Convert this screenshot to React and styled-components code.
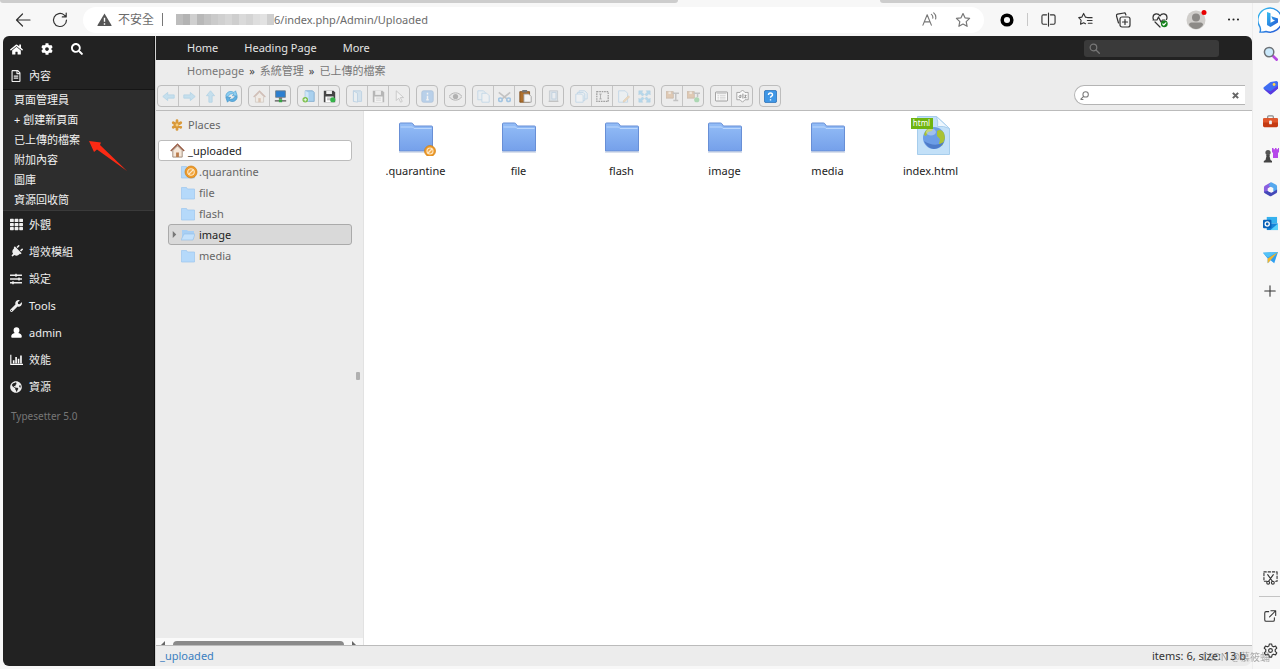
import React from "react";
import styled, { createGlobalStyle, css } from "styled-components";
import {
  FaHome,
  FaCog,
  FaSearch,
  FaRegFileAlt,
  FaTh,
  FaPlug,
  FaSlidersH,
  FaWrench,
  FaGlobeAmericas,
} from "react-icons/fa";

const GlobalStyle = createGlobalStyle`
  * { box-sizing: border-box; }
  html, body { margin: 0; height: 100%; }
  body {
    font: 11px/20px "Noto Sans", "Noto Sans CJK TC", sans-serif;
    color: #333;
    background: #f7f7f7;
    overflow: hidden;
  }
  #root { height: 100%; }
  button, input { font: inherit; color: inherit; margin: 0; padding: 0; border: 0; background: none; }
  button { display: flex; align-items: center; justify-content: center; }
  input:focus { outline: none; }
  a { color: inherit; text-decoration: none; }
  ul, ol { list-style: none; margin: 0; padding: 0; }
  svg { display: block; flex: none; }
`;

/* ---------- browser frame ---------- */

const Browser = styled.div`
  height: 100vh;
  display: flex;
  flex-direction: column;
`;

const TabStrip = styled.div`
  display: flex;
  flex: none;
  height: 3px;
  background: #f7f7f7;
`;

const TabEdge = styled.div`
  flex: ${(p) => p.$grow} 1 0;
  background: ${(p) => (p.$active ? "#f7f7f7" : "#cdcdcd")};
  border-radius: ${(p) => (p.$active ? 0 : "0 0 3px 3px")};
`;

const Frame = styled.div`
  flex: 1;
  min-height: 0;
  display: flex;
`;

const Window = styled.div`
  flex: 1;
  min-width: 0;
  display: flex;
  flex-direction: column;
`;

const AddressRow = styled.div`
  flex: none;
  height: 33px;
  display: flex;
  align-items: center;
  padding-left: 4px;
`;

const ChromeButton = styled.button`
  width: 37px;
  height: 28px;
  color: #333;
`;

const AddressPill = styled.div`
  flex: 1;
  height: 26px;
  margin: 0 4px 0 5px;
  padding: 0 5px 0 14px;
  display: flex;
  align-items: center;
  border-radius: 13px;
  background: #fff;
  color: #6b6b6b;
`;

const Insecure = styled.span`
  padding: 0 6px;
  font-size: 12px;
`;

const Divider = styled.span`
  flex: none;
  width: 1px;
  height: 13px;
  margin: 0 2px;
  background: ${(p) => p.$tone || "#c8c8c8"};
`;

const Mosaic = styled.span`
  display: flex;
  flex: none;
  margin-left: 11px;
`;

const Tile = styled.i`
  width: 7px;
  height: 11px;
  background: ${(p) => p.$tone};
`;

const Url = styled.input`
  flex: 1;
  min-width: 0;
  height: 20px;
`;

const PillButton = styled(ChromeButton)`
  width: 33px;
  color: #777;
`;

/* ---------- edge side bar ---------- */

const EdgeBar = styled.aside`
  flex: none;
  width: 28px;
  padding-bottom: 2px;
  display: flex;
  flex-direction: column;
  overflow: hidden;
  background: #f7f7f7;
  border-left: 1px solid #ededed;
`;

const EdgeItem = styled.button`
  flex: none;
  height: ${(p) => p.$height || 34}px;
  padding-left: ${(p) => (p.$wide ? 5 : 10)}px;
  justify-content: flex-start;
  color: #333;
`;

const EdgeSpacer = styled.div`
  flex: 1;
`;

const EdgeRule = styled.hr`
  width: 22px;
  margin: 2px 0 2px 6px;
  border: 0;
  border-top: 1px solid #c4c4c4;
`;

/* ---------- page ---------- */

const Page = styled.div`
  flex: 1;
  min-height: 0;
  margin: 0 0 3px 3px;
  display: flex;
  overflow: hidden;
  border-radius: 6px 6px 8px 6px;
  background: #ececec;
`;

const Sidebar = styled.nav`
  flex: none;
  width: 152px;
  background: #222;
  border-right: 1px solid #111;
  color: #fff;
`;

const QuickBar = styled.div`
  height: 26px;
  padding-left: 7px;
  display: flex;
  align-items: center;
  gap: 18px;
`;

const MenuLink = styled.a`
  height: 27px;
  padding-left: 7px;
  display: flex;
  align-items: center;
  color: #eee;
`;

const MenuIcon = styled.span`
  flex: none;
  width: 19px;
  svg { transform: rotate(${(p) => p.$turn || 0}deg); }
`;

const SubMenu = styled.ul`
  border-top: 1px solid #151515;
  border-bottom: 1px solid #3a3a3a;
  background: #2d2d2d;
`;

const SubItem = styled.li`
  position: relative;
  height: 20px;
  padding-left: 11px;
  color: #f2f2f2;
`;

const Pointer = styled.svg`
  position: absolute;
  left: 86px;
  top: 11px;
  z-index: 1;
`;

const Version = styled.p`
  margin: 6px 0 0;
  padding-left: 8px;
  font-size: 10px;
  color: #777;
`;

const Main = styled.main`
  flex: 1;
  min-width: 0;
  display: flex;
  flex-direction: column;
  border-left: 1px solid #d4d4d4;
`;

const TopNav = styled.nav`
  flex: none;
  height: 24px;
  padding: 0 33px 0 31px;
  display: flex;
  align-items: center;
  gap: 26px;
  background: #222;
  color: #e4e4e4;
`;

const NavSearch = styled.label`
  width: 135px;
  height: 17px;
  margin-left: auto;
  padding: 0 5px;
  display: flex;
  align-items: center;
  gap: 5px;
  border-radius: 3px;
  background: #3a3a3a;
  color: #777;
`;

const BareInput = styled.input`
  flex: 1;
  min-width: 0;
  height: 15px;
`;

const Crumbs = styled.ol`
  flex: none;
  height: 22px;
  padding-left: 31px;
  display: flex;
  align-items: center;
  gap: 5px;
  color: #777;
`;

const CrumbMark = styled.li`
  color: #444;
`;

const ToolRow = styled.div`
  flex: none;
  height: 29px;
  padding: 3px 7px 0 1px;
  display: flex;
  align-items: flex-start;
  gap: 6px;
  border-bottom: 1px solid #bbb;
`;

const ToolGroup = styled.div`
  flex: none;
  height: 22px;
  display: flex;
  border: 1px solid #bdbdbd;
  border-radius: 4px;
`;

const ToolButton = styled.button`
  width: 20px;
  & + & {
    width: 21px;
    border-left: 1px solid #c4c4c4;
  }
  svg { opacity: ${(p) => (p.$off ? 0.35 : 1)}; }
`;

const FileSearch = styled.label`
  width: 171px;
  height: 20px;
  margin-left: auto;
  padding: 0 6px 0 5px;
  display: flex;
  align-items: center;
  gap: 5px;
  border: 1px solid #b4b4b4;
  border-right: 0;
  border-radius: 10px 0 0 10px;
  background: #fff;
`;

const Workspace = styled.div`
  flex: 1;
  min-height: 0;
  display: flex;
  background: #fff;
`;

const TreePane = styled.div`
  flex: none;
  width: 208px;
  display: flex;
  background: #ececec;
  flex-direction: column;
  border-right: 1px solid #e2e2e2;
`;

const TreeBody = styled.div`
  flex: 1;
  min-height: 0;
  padding: 3px 11px 0 2px;
  display: flex;
`;

const Tree = styled.ul`
  flex: 1;
`;

const treeBox = css`
  border-color: ${(p) => (p.$state === "root" ? "#bcbcbc" : "#aaa")};
  background: ${(p) => (p.$state === "root" ? "#fff" : "#d9d9d9")};
  color: #222;
`;

const TreeRow = styled.li`
  height: 21px;
  margin-left: ${(p) => (p.$deep ? 10 : 0)}px;
  margin-bottom: ${(p) => (p.$heading ? 5 : 0)}px;
  padding-left: ${(p) => (p.$deep ? 2 : 1)}px;
  display: flex;
  align-items: center;
  border: 1px solid transparent;
  border-radius: 3px;
  color: #666;
  ${(p) => p.$state && treeBox}
`;

const TreeArrow = styled.span`
  flex: none;
  width: 10px;
  display: flex;
`;

const TreeIcon = styled.span`
  flex: none;
  width: 18px;
  display: flex;
`;

const Splitter = styled.span`
  align-self: center;
  width: 4px;
  height: 8px;
  margin-right: -8px;
  margin-left: 4px;
  border-radius: 1px;
  background: #b0b0b0;
`;

const ScrollTrack = styled.div`
  flex: none;
  height: 7px;
  padding: 3px 7px 0 5px;
  display: flex;
  gap: 8px;
  background: #fafafa;
`;

const ScrollThumb = styled.div`
  flex: 1;
  border-radius: 4px 4px 0 0;
  background: #8a8a8a;
`;

const Files = styled.ul`
  flex: 1;
  display: flex;
  flex-wrap: wrap;
  align-content: flex-start;
`;

const File = styled.li`
  width: 103px;
  padding-top: 3px;
  display: flex;
  flex-direction: column;
  align-items: center;
  gap: 5px;
  color: #222;
`;

const StatusBar = styled.footer`
  flex: none;
  height: 21px;
  padding: 0 6px 0 4px;
  display: flex;
  align-items: center;
  justify-content: space-between;
  border-top: 1px solid #bbb;
`;

const PathLink = styled.a`
  color: #3b7fc0;
`;

const Watermark = styled.span`
  position: fixed;
  right: 10px;
  bottom: 2px;
  font-size: 10px;
  color: rgba(120, 120, 120, 0.6);
`;

/* ---------- drawings ---------- */

const Svg = ({ s = 14, box = 16, children, ...rest }) => (
  <svg width={s} height={s} viewBox={`0 0 ${box} ${box}`} fill="none" aria-hidden="true" {...rest}>
    {children}
  </svg>
);

const Line = (props) => (
  <Svg stroke="currentColor" strokeWidth="1.2" strokeLinecap="round" strokeLinejoin="round" {...props} />
);

const STAR = "M8 1.5l2 4.300 4.600.6-3.400 3.200.9 4.700L8 12l-4.100 2.300.9-4.700L1.400 6.400 6 5.800z";

const toolIcons = {
  back: <path d="M1 8l6-5v3h8v4H7v3z" fill="#7fc8f0" stroke="#4ba6da" />,
  forward: <path d="M15 8L9 3v3H1v4h8v3z" fill="#7fc8f0" stroke="#4ba6da" />,
  up: <path d="M8 1l5 6h-3v8H6V7H3z" fill="#7fc8f0" stroke="#4ba6da" />,
  reload: (
    <>
      <path d="M1 8c0-5 5-8 10-5l2-2 2 6H9l2-2C8 4 5 5 4 8z" fill="#8dcdf0" stroke="#4a9fd4" strokeWidth=".8" />
      <path d="M15 8c0 5-5 8-10 5l-2 2-2-6h6l-2 2c3 1 6 0 7-3z" fill="#5fb0e2" stroke="#3f8fc4" strokeWidth=".8" />
    </>
  ),
  home: (
    <>
      <path d="M3 8v7h10V8L8 3z" fill="#f6e8da" stroke="#a08a78" />
      <path d="M.8 8.600L8 1.400l7.200 7.200" stroke="#9a5f48" strokeWidth="1.500" />
      <path d="M6.500 10h3v5h-3z" fill="#b97c4d" />
    </>
  ),
  net: (
    <>
      <path d="M2 1h12v8H2z" fill="#2b7fd0" stroke="#6d7a85" />
      <path d="M6 9h4v2H6z" fill="#777" />
      <path d="M1 13.500h14" stroke="#555" strokeWidth="1.600" />
      <path d="M6 11.500h4v3.500H6z" fill="#35a343" />
    </>
  ),
  newFolder: (
    <>
      <path d="M4 1h9l2 2v11H4z" fill="#a9d0ee" stroke="#7fa9cc" />
      <path d="M4 1l4 2v11l-4-1z" fill="#cfe6f7" />
      <circle cx="4" cy="12" r="3.400" fill="#7cbf4b" />
      <path d="M4 10v4M2 12h4" stroke="#fff" />
    </>
  ),
  newFile: (
    <>
      <path d="M1 1h12l2 2v12H1z" fill="#444" />
      <path d="M4 1h7v4H4z" fill="#eee" />
      <path d="M3 8h10v7H3z" fill="#fff" />
      <path d="M5 10h6M5 12h4" stroke="#999" />
      <circle cx="12" cy="12" r="3.200" fill="#36b34a" />
    </>
  ),
  open: (
    <>
      <path d="M3 1h9l1 1v12H3z" fill="#a9d0ee" stroke="#5f9dd0" />
      <path d="M3 1l5 3v11l-5-1z" fill="#e6f3fc" stroke="#5f9dd0" />
    </>
  ),
  save: (
    <>
      <path d="M1 1h12l2 2v12H1z" fill="#555" />
      <path d="M4 1h7v5H4z" fill="#eee" />
      <path d="M3 8h10v7H3z" fill="#fff" />
      <path d="M5 10h6M5 12.500h6" stroke="#999" />
    </>
  ),
  select: <path d="M4 1v12l3-3 2.400 5 2-1L9 9.300h4z" fill="#fff" stroke="#777" />,
  info: (
    <>
      <rect x="1" y="1" width="14" height="14" rx="2" fill="#5b9fe6" stroke="#3b78bd" />
      <path d="M8 3.500v2M8 7v5M6.500 12h3" stroke="#fff" strokeWidth="1.800" />
    </>
  ),
  eye: (
    <>
      <path d="M0 8c4-6 12-6 16 0-4 6-12 6-16 0z" fill="#ddd" stroke="#333" />
      <circle cx="8" cy="8" r="3.200" fill="#444" />
    </>
  ),
  copy: (
    <>
      <path d="M1 1h7l2 2v9H1z" fill="#e2f1fb" stroke="#6aaadb" />
      <path d="M6 4h6l3 3v8H6z" fill="#f4faff" stroke="#6aaadb" />
    </>
  ),
  cut: (
    <>
      <path d="M1 3l10 8M15 3L5 11" stroke="#777" strokeWidth="2" />
      <circle cx="3" cy="12" r="2.200" stroke="#1f7fd0" strokeWidth="2" />
      <circle cx="13" cy="12" r="2.200" stroke="#1f7fd0" strokeWidth="2" />
    </>
  ),
  paste: (
    <>
      <path d="M1 2h12v13H1z" fill="#b0702d" stroke="#7c4b1a" />
      <path d="M4 0h6v3H4z" fill="#777" />
      <path d="M6 5h6l3 3v7H6z" fill="#f6f6f6" stroke="#999" />
    </>
  ),
  trash: (
    <>
      <path d="M3 1h10v13H3z" fill="#b9cfe0" stroke="#7d8b97" />
      <path d="M6 3h5v8H6z" fill="#e7f1fa" stroke="#6e9cc8" />
      <path d="M2 14h12" stroke="#777" strokeWidth="1.600" />
    </>
  ),
  duplicate: (
    <>
      <path d="M5 1h7l3 3v7H5z" fill="#e2f1fb" stroke="#6aaadb" />
      <path d="M3 3h7l2 2v8H3z" fill="#e2f1fb" stroke="#6aaadb" />
      <path d="M1 5h7l2 2v8H1z" fill="#f4faff" stroke="#6aaadb" />
    </>
  ),
  rename: (
    <>
      <rect x="1" y="2" width="14" height="12" stroke="#111" strokeWidth="1.500" strokeDasharray="2 1" />
      <path d="M4 5h3M5.500 5v6M4 11h3" stroke="#222" />
    </>
  ),
  edit: (
    <>
      <path d="M2 1h8l3 3v11H2z" fill="#eaf5fd" stroke="#6aaadb" />
      <path d="M8 13l6-6 1.500 1.500-6 6-2 .5z" fill="#eab56c" stroke="#b57d35" strokeWidth=".6" />
    </>
  ),
  resize: (
    <path
      d="M1 1h5L4.500 2.500l3 3-2 2-3-3L1 6zM15 1v5l-1.500-1.500-3 3-2-2 3-3L10 1zM1 15v-5l1.500 1.500 3-3 2 2-3 3L6 15zM15 15h-5l1.500-1.500-3-3 2-2 3 3L15 10z"
      fill="#54b2e8"
      stroke="#2d8cc7"
      strokeWidth=".5"
    />
  ),
  extract: (
    <>
      <path d="M0 2h9v8H0z" fill="#c88b4e" stroke="#8b5f32" />
      <path d="M3 2h3v3H3z" fill="#f3dcc0" />
      <path d="M8 4h8M12 4v8M9 13h6" stroke="#777" strokeWidth="1.800" />
    </>
  ),
  archive: (
    <>
      <path d="M0 2h9v8H0z" fill="#c88b4e" stroke="#8b5f32" />
      <path d="M3 2h3v3H3z" fill="#f3dcc0" />
      <path d="M8 4h8M13 4v5" stroke="#777" strokeWidth="1.800" />
      <circle cx="12" cy="12" r="3.200" fill="#36b34a" />
    </>
  ),
  list: (
    <>
      <rect x="0.500" y="2.500" width="15" height="11" rx="1" fill="#fbfbfb" stroke="#888" />
      <path d="M2 4.500h12" stroke="#bbb" />
      <path d="M3 7h2M6 7h7M3 9h2M6 9h7M3 11h2M6 11h7" stroke="#ccc" />
    </>
  ),
  sort: (
    <>
      <path d="M8 0l3 3h4v9h-4l-3 3-3-3H1V3h4z" fill="#fafafa" stroke="#999" />
      <path d="M5.500 6.500c-2 0-2.500 3-.5 3l1-.5V6M8.500 4.500v6M10.500 6.500h2l-2 3h2.500" stroke="#777" />
    </>
  ),
  help: (
    <>
      <rect x="0.500" y="0.500" width="15" height="15" rx="2" fill="#3f97e6" stroke="#2b6fb5" />
      <path d="M5.500 6c0-3 5-3 5 0 0 1.500-2.500 1.700-2.500 3.500M8 11.300v1.500" stroke="#fff" strokeWidth="1.700" />
    </>
  ),
};

const NoEntry = ({ x, y, r }) => (
  <g transform={`translate(${x} ${y})`}>
    <circle r={r} fill="#ee9a2a" stroke="#cf7f15" strokeWidth=".7" />
    <circle r={r * 0.55} fill="#f2a640" stroke="#fde9c8" strokeWidth="1.100" />
    <path d={`M${-r * 0.4} ${r * 0.4}L${r * 0.4} ${-r * 0.4}`} stroke="#fde9c8" strokeWidth="1.300" />
  </g>
);

const SmallFolder = ({ kind }) => (
  <Svg s={kind === "locked" ? 17 : 14} box={kind === "locked" ? 17 : 14}>
    {kind === "open" ? (
      <>
        <path d="M1 2h5l1 1h6v8H1z" fill="#a8cff4" />
        <path d="M3 6h11l-2 6H0z" fill="#c4e1fb" stroke="#92bde6" strokeWidth=".6" />
      </>
    ) : (
      <path
        d={kind === "locked" ? "M.5 3.500h5l1 1.500h7v10H.5z" : "M.5 1.500h5l1 1.500h7v10H.5z"}
        fill="#b5d9fa"
        stroke="#9cc6ee"
        strokeWidth=".7"
      />
    )}
    {kind === "locked" && <NoEntry x={10} y={9} r={6} />}
  </Svg>
);

const BigFolder = ({ locked }) => (
  <svg width="40" height="42" viewBox="0 0 40 42" fill="none" aria-hidden="true">
    <defs>
      <linearGradient id="folderBlue" x1="0" y1="0" x2="0" y2="1">
        <stop offset="0" stopColor="#93bdf7" />
        <stop offset="1" stopColor="#75a0ea" />
      </linearGradient>
    </defs>
    <path d="M3.500 10q0-1 1-1h11q1 0 1.500 1l1.500 2h17q1 0 1 1v24H3.500z" fill="url(#folderBlue)" stroke="#688fd6" />
    <path d="M4.500 13h12l1.500 1.500h17.500" stroke="#bcd8fd" />
    <path d="M3 38h34" stroke="#b4c2dc" />
    {locked && <NoEntry x={34} y={37} r={5.500} />}
  </svg>
);

const HtmlBadge = styled.span`
  position: absolute;
  left: 0;
  top: 4px;
  width: 22px;
  height: 11px;
  background: #6fb410;
  color: #fff;
  font-size: 8px;
  line-height: 10px;
  text-align: center;
`;

const HtmlFigure = styled.span`
  position: relative;
  width: 40px;
  height: 42px;
`;

const HtmlFile = () => (
  <HtmlFigure>
    <svg width="40" height="42" viewBox="0 0 40 42" fill="none" aria-hidden="true">
      <path d="M6.500 2.500h19l13 12v26h-32z" fill="#c2e0f8" stroke="#a6cdec" />
      <path d="M25.500 2.500q2 6 1 10 6-1 12 2z" fill="#eef7fe" stroke="#a9cfee" />
      <circle cx="23" cy="24" r="11" fill="#6c9de6" />
      <path d="M14 18q3-5 8-4l-1 3-4 1-2 4-2-1zM26 17q4-3 7 2l1 5-3 8-3-2 1-5-3-3z" fill="#a9c233" />
      <path d="M13 27q3 7 10 8 7-1 10-7-9 6-20-1z" fill="#4d7bc9" />
      <ellipse cx="20" cy="18" rx="5" ry="3.500" fill="#fff" opacity=".35" />
    </svg>
    <HtmlBadge>html</HtmlBadge>
  </HtmlFigure>
);

const BarsIcon = () => (
  <Svg s={13}>
    <path d="M1 2v12h15" stroke="#fff" strokeWidth="1.400" />
    <path d="M4.500 13V9M7.500 13V5M10.500 13V7M13.500 13V3" stroke="#fff" strokeWidth="2" />
  </Svg>
);

const UserIcon = () => (
  <Svg s={13}>
    <path
      d="M8 1.500c2.300 0 3.600 1.600 3.600 3.600 0 1.500-.6 2.700-1.500 3.400 2.900.4 4.400 2 4.400 4.500 0 1-.6 1.500-1.500 1.500H3c-.9 0-1.500-.5-1.500-1.500 0-2.500 1.500-4.100 4.400-4.500C5 7.800 4.400 6.600 4.400 5.100c0-2 1.300-3.600 3.600-3.600z"
      fill="#fff"
    />
  </Svg>
);

/* ---------- data ---------- */

const mosaicTones = [
  "#bdbdbd", "#b3b3b3", "#cfcfcf", "#b8b8b8", "#c2c2c2", "#cacaca", "#d0d0d0",
  "#d6d6d6", "#cecece", "#dadada", "#d4d4d4", "#dedede", "#e2e2e2", "#cfcfcf",
];

const submenu = ["頁面管理員", "+ 創建新頁面", "已上傳的檔案", "附加內容", "圖庫", "資源回收筒"];

const menu = [
  { text: "外觀", icon: <FaTh size={13} /> },
  { text: "增效模組", icon: <FaPlug size={13} />, turn: 45 },
  { text: "設定", icon: <FaSlidersH size={12} /> },
  { text: "Tools", icon: <FaWrench size={12} /> },
  { text: "admin", icon: <UserIcon /> },
  { text: "效能", icon: <BarsIcon /> },
  { text: "資源", icon: <FaGlobeAmericas size={12} /> },
];

const toolGroups = [
  [["back", 1], ["forward", 1], ["up", 1], ["reload"]],
  [["home", 1], ["net"]],
  [["newFolder"], ["newFile"]],
  [["open", 1], ["save", 1], ["select", 1]],
  [["info", 1]],
  [["eye", 1]],
  [["copy", 1], ["cut", 1], ["paste"]],
  [["trash", 1]],
  [["duplicate", 1], ["rename", 1], ["edit", 1], ["resize", 1]],
  [["extract", 1], ["archive", 1]],
  [["list"], ["sort"]],
  [["help"]],
];

const treeRows = [
  [".quarantine", "locked"],
  ["file", "closed"],
  ["flash", "closed"],
  ["image", "open"],
  ["media", "closed"],
];

const files = [".quarantine", "file", "flash", "image", "media", "index.html"];

const browserTools = [
  ["Split screen", <Line s={15}><path d="M8 1v14M6 3H2.500Q1 3 1 4.500v7Q1 13 2.500 13H6M10 3h3.500Q15 3 15 4.500v7q0 1.500-1.500 1.500H10" /></Line>],
  ["Favorites", <Line s={15}><path d="M10 5.800L8 5.500 6 1.500 4 5.500 .8 6l2.500 2.800-.6 4.200L6 11.500l2 1M10.500 6H15M10 9h5M11 12h4" /></Line>],
  ["Collections", <Line s={16}><path d="M3.500 11L1.500 4Q1.300 2.500 2.500 2.200L9 1q1.300-.2 1.600 1l.3 1" /><rect x="5" y="5" width="10" height="10" rx="2" /><path d="M10 7.500v5M7.500 10h5" /></Line>],
  ["Browser essentials", (
    <Line s={16}>
      <path d="M8 4C6.500 1 1 1 1 5.500q0 1 .5 2M8 4c1.500-3 7-3 7 1.500q0 1-.5 2M3 10l5 5M1 8h4l1.500-3 2.500 5L10.500 8H13" />
      <circle cx="12.300" cy="11.800" r="3.400" fill="#13801b" stroke="none" />
      <path d="M10.800 12l1 1 2-2.200" stroke="#fff" />
    </Line>
  )],
  ["Profile", (
    <Svg s={21} box={21}>
      <circle cx="10" cy="11" r="9.500" fill="#d0cecb" />
      <circle cx="10" cy="8.500" r="4" fill="#8c8a87" />
      <path d="M3 16q0-2.500 2.500-2.500h9Q17 13.500 17 16q-3 4-7 4t-7-4z" fill="#8c8a87" />
      <circle cx="18" cy="3.500" r="2.500" fill="#e80000" />
    </Svg>
  )],
  ["Settings and more", <Svg s={13}><g fill="#222"><circle cx="2.500" cy="8" r="1.300" /><circle cx="8" cy="8" r="1.300" /><circle cx="13.500" cy="8" r="1.300" /></g></Svg>],
];

const edgeTop = [
  ["Search", (
    <Svg s={15}>
      <path d="M10 10l4.500 4.500" stroke="#b44ae0" strokeWidth="3" strokeLinecap="round" />
      <circle cx="6.500" cy="6.500" r="5" fill="#cbe9fb" stroke="#6d7277" strokeWidth="1.600" />
    </Svg>
  )],
  ["Shopping", (
    <Svg s={15}>
      <path d="M8 2l6.500-1 1.500 1v7l-7 6q-1 .7-2 0L.8 9.500q-.7-1 0-1.800z" fill="#3f6df2" />
      <path d="M1 9.500l6 5.500q1 .7 2 0l7-6V6l-8 6z" fill="#5b39e0" />
      <circle cx="11.800" cy="4.800" r="1.500" fill="#ffd54a" />
    </Svg>
  )],
  ["Tools", (
    <Svg s={15}>
      <path d="M5 5V3q0-1 1-1h4q1 0 1 1v2" stroke="#8a8a8a" strokeWidth="1.300" />
      <rect x="0" y="4.500" width="16" height="9.500" rx="1.500" fill="#c43a12" />
      <path d="M0 6q0-1.500 1.500-1.500h13Q16 4.500 16 6v3H0z" fill="#e0562b" />
      <rect x="6.500" y="7" width="3" height="4" rx="1" fill="#eee" />
    </Svg>
  )],
  ["Games", (
    <Svg s={16}>
      <path d="M9 1h1.500v1.200h1.500V1h1.500v1.200H15V1h1v4l-1 1v5h-5V6L9 5z" fill="#b648ea" />
      <circle cx="5" cy="5.500" r="2.600" fill="#555" />
      <path d="M3 8h4l-.5 1 1 4 1.500 1v1.500H.8V14l1.700-1 1-4z" fill="#444" />
    </Svg>
  )],
  ["Microsoft 365", (
    <Svg s={15}>
      <path d="M8 .5L2 4Q1 4.600 1 6v5l4 2V7l6-4z" fill="#8a5fe0" />
      <path d="M8 .5q1-.4 2 .2L14 3q1 .6 1 2v6l-4-1V6.500L6 4z" fill="#55a8ee" />
      <path d="M1 10.500q0 1 1 1.500l5 3q1 .6 2 0l5-3q1-.6 1-2V8l-6 3.500L5 9.500z" fill="#4448b8" />
      <path d="M8 5.500l2.500 1.500v2.500L8 11 5.500 9.500V7z" fill="#f7f7f7" />
    </Svg>
  )],
  ["Outlook", (
    <Svg s={15}>
      <path d="M4 1h11v7H4z" fill="#35b1ee" />
      <path d="M4 8h12v7H4z" fill="#1583d8" />
      <path d="M16 8v7H8z" fill="#58d0fa" />
      <rect x="0" y="4" width="9" height="9" rx="1" fill="#0b62b8" />
      <circle cx="4.500" cy="8.500" r="2.200" stroke="#fff" strokeWidth="1.400" />
    </Svg>
  )],
  ["Drop", (
    <Svg s={15}>
      <path d="M0 3l16-1-4 12-4-3-3 3V9z" fill="#2f9ff0" />
      <path d="M5 14V9l11-7-8 9z" fill="#f3b52b" />
      <path d="M0 3l16-1L5 8z" fill="#53c3f7" />
    </Svg>
  )],
  ["Customize", <Line s={14}><path d="M8 2v12M2 8h12" /></Line>],
];

const BingIcon = () => (
  <Svg s={26} box={26}>
    <defs>
      <linearGradient id="bingBlue" x1="0" y1="0" x2="1" y2="1">
        <stop offset="0" stopColor="#36c0f0" />
        <stop offset="1" stopColor="#2454d6" />
      </linearGradient>
    </defs>
    <path d="M2 25q1-2 0-5A12 12 0 1 1 8 24.500q-3 .8-6 .5z" fill="#fff" stroke="url(#bingBlue)" strokeWidth="1.400" />
    <path d="M9 5l3.500 1.200v9.600L17 13.500l-2.500-1.200-1.200-3L20 11.500v4L12.500 20 9 18z" fill="url(#bingBlue)" />
  </Svg>
);

export default function App() {
  return (
    <Browser>
      <GlobalStyle />
      <TabStrip>
        <TabEdge $grow={678} />
        <TabEdge $grow={202} $active />
        <TabEdge $grow={400} />
      </TabStrip>
      <Frame>
        <Window>
          <AddressRow>
            <ChromeButton aria-label="Back">
              <Line s={16}><path d="M15 8H1.500M7.500 2L1.500 8l6 6" /></Line>
            </ChromeButton>
            <ChromeButton aria-label="Reload">
              <Line s={16}><path d="M14.500 8A6.500 6.500 0 1 1 12.300 3.100L14 4.700M14.200 1v3.900h-3.900" /></Line>
            </ChromeButton>
            <AddressPill>
              <Svg s={15}>
                <path d="M8 1.500L15.500 14q.3 1-.7 1H1.200q-1 0-.7-1z" fill="#555" />
                <path d="M8 6v4.500M8 12v1.500" stroke="#fff" strokeWidth="1.500" />
              </Svg>
              <Insecure>不安全</Insecure>
              <Divider $tone="#777" />
              <Mosaic>
                {mosaicTones.map((tone, i) => <Tile key={i} $tone={tone} />)}
              </Mosaic>
              <Url aria-label="Address" defaultValue="6/index.php/Admin/Uploaded" />
              <PillButton aria-label="Read aloud">
                <Line s={15}><path d="M1 14L5.500 3 10 14M2.500 10.500h6M10 2.500q2 1.500 1.500 4M12.500 1q3 2.500 2 6.500" /></Line>
              </PillButton>
              <PillButton aria-label="Add to favorites">
                <Line s={16}><path d={STAR} /></Line>
              </PillButton>
            </AddressPill>
            <ChromeButton aria-label="Extension">
              <Svg s={14}><circle cx="8" cy="8" r="5.500" stroke="#000" strokeWidth="4" /></Svg>
            </ChromeButton>
            <Divider />
            {browserTools.map(([name, icon]) => (
              <ChromeButton key={name} aria-label={name}>{icon}</ChromeButton>
            ))}
          </AddressRow>

          <Page>
            <Sidebar>
              <QuickBar>
                <a href="#home" aria-label="Home"><FaHome size={13} /></a>
                <a href="#settings" aria-label="Settings"><FaCog size={12} /></a>
                <a href="#search" aria-label="Search"><FaSearch size={12} /></a>
              </QuickBar>
              <MenuLink href="#content"><MenuIcon><FaRegFileAlt size={12} /></MenuIcon>內容</MenuLink>
              <SubMenu>
                {submenu.map((text, i) => (
                  <SubItem key={text}>
                    <a href="#page">{text}</a>
                    {i === 2 && (
                      <Pointer width="38" height="31" viewBox="0 0 38 31" aria-hidden="true">
                        <path d="M0 0l12 1.500-1 2.500L38 30 8 8.500 5 11z" fill="#fb2a14" />
                      </Pointer>
                    )}
                  </SubItem>
                ))}
              </SubMenu>
              {menu.map(({ text, icon, turn }) => (
                <MenuLink key={text} href="#menu"><MenuIcon $turn={turn}>{icon}</MenuIcon>{text}</MenuLink>
              ))}
              <Version>Typesetter 5.0</Version>
            </Sidebar>

            <Main>
              <TopNav>
                <a href="#home">Home</a>
                <a href="#heading">Heading Page</a>
                <a href="#more">More</a>
                <NavSearch>
                  <Line s={11} strokeWidth="1.800"><circle cx="6.500" cy="6.500" r="4.800" /><path d="M10.500 10.500L15 15" /></Line>
                  <BareInput aria-label="Search site" />
                </NavSearch>
              </TopNav>
              <Crumbs>
                <li><a href="#home">Homepage</a></li>
                <CrumbMark>»</CrumbMark>
                <li><a href="#admin">系統管理</a></li>
                <CrumbMark>»</CrumbMark>
                <li><a href="#uploaded">已上傳的檔案</a></li>
              </Crumbs>
              <ToolRow>
                {toolGroups.map((group, g) => (
                  <ToolGroup key={g}>
                    {group.map(([name, off]) => (
                      <ToolButton key={name} aria-label={name} $off={off}>
                        <Svg s={13}>{toolIcons[name]}</Svg>
                      </ToolButton>
                    ))}
                  </ToolGroup>
                ))}
                <FileSearch>
                  <Svg s={9}>
                    <circle cx="10" cy="6" r="4.800" stroke="#777" strokeWidth="1.800" />
                    <path d="M6.500 9.500L1 15M1 15h5" stroke="#777" strokeWidth="1.800" />
                  </Svg>
                  <BareInput aria-label="Search files" />
                  <button aria-label="Clear search">
                    <Svg s={7} box={8}><path d="M1 1l6 6M7 1L1 7" stroke="#666" strokeWidth="2.400" /></Svg>
                  </button>
                </FileSearch>
              </ToolRow>

              <Workspace>
                <TreePane>
                  <TreeBody>
                    <Tree>
                      <TreeRow $heading>
                        <TreeArrow />
                        <TreeIcon>
                          <Svg s={14}>
                            <path d="M8 3v10M3.700 5.500l8.600 5M3.700 10.500l8.600-5" stroke="#d9993a" strokeWidth="3.200" strokeLinecap="round" />
                            <circle cx="8" cy="8" r="1.600" fill="#f8cf7b" />
                          </Svg>
                        </TreeIcon>
                        Places
                      </TreeRow>
                      <TreeRow $state="root">
                        <TreeArrow />
                        <TreeIcon><Svg s={15}>{toolIcons.home}</Svg></TreeIcon>
                        _uploaded
                      </TreeRow>
                      {treeRows.map(([name, kind]) => (
                        <TreeRow key={name} $deep $state={kind === "open" ? "current" : undefined}>
                          <TreeArrow>
                            {kind === "open" && <Svg s={7} box={8}><path d="M2 0l4 4-4 4z" fill="#777" /></Svg>}
                          </TreeArrow>
                          <TreeIcon><SmallFolder kind={kind} /></TreeIcon>
                          {name}
                        </TreeRow>
                      ))}
                    </Tree>
                    <Splitter />
                  </TreeBody>
                  <ScrollTrack>
                    <Svg s={4} box={4}><path d="M4 0v4H0z" fill="#666" /></Svg>
                    <ScrollThumb />
                    <Svg s={4} box={4}><path d="M0 0v4h4z" fill="#666" /></Svg>
                  </ScrollTrack>
                </TreePane>
                <Files>
                  {files.map((name) => (
                    <File key={name}>
                      {name === "index.html" ? <HtmlFile /> : <BigFolder locked={name === ".quarantine"} />}
                      {name}
                    </File>
                  ))}
                </Files>
              </Workspace>
              <StatusBar>
                <PathLink href="#uploaded">_uploaded</PathLink>
                <span>items: 6, size: 13 b</span>
              </StatusBar>
            </Main>
          </Page>
        </Window>

        <EdgeBar>
          <EdgeItem aria-label="Bing" $height={33} $wide><BingIcon /></EdgeItem>
          {edgeTop.map(([name, icon]) => (
            <EdgeItem key={name} aria-label={name}>{icon}</EdgeItem>
          ))}
          <EdgeSpacer />
          <EdgeItem aria-label="Screenshot">
            <Line s={15}>
              <path d="M4 12H1V2M15 2v10h-3M1 2h14" strokeDasharray="2.500 2" />
              <path d="M5 5l5 7M11 5l-5 7" />
              <circle cx="5.500" cy="13.500" r="1.500" />
              <circle cx="10.500" cy="13.500" r="1.500" />
            </Line>
          </EdgeItem>
          <EdgeRule />
          <EdgeItem aria-label="Open link">
            <Line s={14}><path d="M6.500 3H3.500Q2 3 2 4.500v8Q2 14 3.500 14h8q1.500 0 1.500-1.500V10M9 2h5.500v5.500M14.500 2L7.500 9" /></Line>
          </EdgeItem>
          <EdgeItem aria-label="Settings">
            <Line s={15}>
              <path d="M6.800 1h2.400l.5 2.200 1.600.9 2.100-.8 1.300 2.200-1.700 1.600v1.800l1.700 1.600-1.300 2.200-2.100-.8-1.600.9-.5 2.200H6.800l-.5-2.200-1.600-.9-2.100.8-1.300-2.200L3 8.900V7.100L1.300 5.500l1.300-2.200 2.100.8 1.600-.9z" />
              <circle cx="8" cy="8" r="2" />
            </Line>
          </EdgeItem>
        </EdgeBar>
      </Frame>
      <Watermark>CSDN @慕筱蛹</Watermark>
    </Browser>
  );
}
